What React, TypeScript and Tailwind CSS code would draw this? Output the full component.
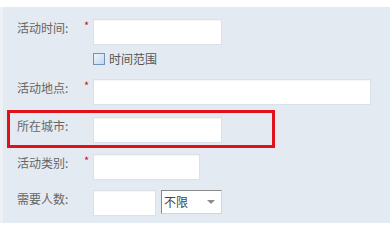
const font = { fontFamily: '"Microsoft YaHei", "Noto Sans CJK SC", sans-serif' };

const Label = ({ text, required }: { text: string; required?: boolean }) => (
  <>
    <div className="w-[67px] shrink-0 pt-[1px] text-[12px] leading-[16px] text-[#666]">{text}</div>
    <div className="w-[9px] shrink-0 pt-[1px] text-[11px] leading-[10px] text-[#d0101a]">
      {required ? "*" : ""}
    </div>
  </>
);

const TextBox = ({ width }: { width: string }) => (
  <div
    className={`h-[26px] shrink-0 ${width} border border-[#dbe1e8] bg-white shadow-[inset_0_1px_1px_rgba(0,0,0,0.04)]`}
  />
);

export default function App() {
  return (
    <div className="w-[390px] h-[223px] overflow-hidden bg-white pt-[7px]" style={font}>
      <div className="h-full border-l-[3px] border-[#edf1f5] bg-[#e4eaf1] pt-[12px] pl-[14px] pr-[19px]">
        {/* 活动时间 */}
        <div className="flex items-start">
          <Label text="活动时间:" required />
          <TextBox width="w-[129px]" />
        </div>

        <div className="mt-[8px] ml-[76px] flex items-center gap-[4px]">
          <span className="h-[12px] w-[12px] border border-[#6f93c0] bg-gradient-to-br from-[#eef5fd] to-[#c3d8f0]" />
          <span className="text-[12px] leading-[12px] text-[#555]">时间范围</span>
        </div>

        {/* 活动地点 */}
        <div className="mt-[14px] flex items-start">
          <Label text="活动地点:" required />
          <TextBox width="flex-1" />
        </div>

        {/* 所在城市 */}
        <div className="relative mt-[12px] flex items-start">
          <Label text="所在城市:" />
          <TextBox width="w-[129px]" />
          <div className="pointer-events-none absolute left-[-10px] top-[-7px] h-[38px] w-[268px] border-[3px] border-[#e0111b]" />
        </div>

        {/* 活动类别 */}
        <div className="mt-[11px] flex items-start">
          <Label text="活动类别:" required />
          <TextBox width="w-[107px]" />
        </div>

        {/* 需要人数 */}
        <div className="mt-[10px] flex items-start">
          <Label text="需要人数:" />
          <TextBox width="w-[63px]" />
          <div className="ml-[5px] flex h-[24px] w-[61px] items-center justify-between border border-t-[#8a8a8a] border-l-[#8a8a8a] border-r-[#d6d6d6] border-b-[#d6d6d6] bg-white pl-[2px] pr-[6px]">
            <span className="text-[12px] leading-[12px] text-[#444]">不限</span>
            <span className="h-0 w-0 border-x-[4px] border-t-[4px] border-x-transparent border-t-[#8c8c8c]" />
          </div>
        </div>
      </div>
    </div>
  );
}
